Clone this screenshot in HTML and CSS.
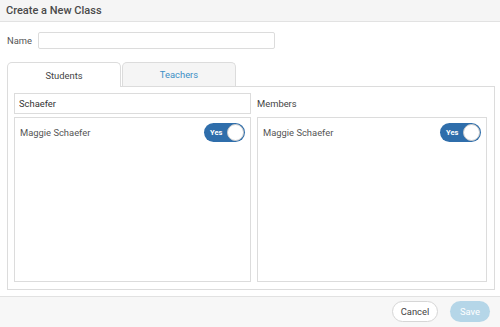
FILE: index.html
```html
<!DOCTYPE html>
<html lang="en">

<head>
    <meta charset="UTF-8">
    <title>Create a New Class</title>
    <link rel="stylesheet" href="styles.css">
</head>

<body>
    <header class="modal-header">
        <h1>Create a New Class</h1>
    </header>
    <div class="modal-body">
        <div class="name-row">
            <label for="class-name">Name</label>
            <input type="text" id="class-name">
        </div>
        <div class="tabs">
            <div class="tab active">Students</div>
            <div class="tab">Teachers</div>
        </div>
        <div class="tab-panel">
            <div class="col">
                <input type="text" class="search" value="Schaefer">
                <div class="list">
                    <div class="item">
                        <span>Maggie Schaefer</span>
                        <span class="toggle"><span class="toggle-text">Yes</span><span class="knob"></span></span>
                    </div>
                </div>
            </div>
            <div class="col">
                <div class="col-title">Members</div>
                <div class="list">
                    <div class="item">
                        <span>Maggie Schaefer</span>
                        <span class="toggle"><span class="toggle-text">Yes</span><span class="knob"></span></span>
                    </div>
                </div>
            </div>
        </div>
    </div>
    <footer class="modal-footer">
        <button class="btn cancel">Cancel</button>
        <button class="btn save">Save</button>
    </footer>
</body>

</html>
```

FILE: styles.css
```css
body {
    margin: 0;
    width: 500px;
    height: 327px;
    font-family: Roboto, "Liberation Sans", sans-serif;
    color: #555;
    background-color: white;
    overflow: hidden;
}

.modal-header {
    height: 21px;
    background-color: #f5f5f5;
    border-bottom: 1px solid #e2e2e2;
    display: flex;
    align-items: center;
    padding-left: 6px;
}

.modal-header h1 {
    margin: 0;
    font-size: 11px;
    font-weight: 500;
    color: #4a4a4a;
}

.modal-body {
    padding: 10px 5px 0 7px;
}

.name-row {
    display: flex;
    align-items: center;
    font-size: 9.4px;
}

.name-row label {
    width: 31px;
}

.name-row input {
    width: 237px;
    height: 17px;
    box-sizing: border-box;
    border: 1px solid #dcdcdc;
    border-radius: 2px;
    margin: 0;
}

.tabs {
    display: flex;
    margin-top: 13px;
    height: 24px;
    gap: 1px;
}

.tab {
    width: 114px;
    box-sizing: border-box;
    border: 1px solid #dcdcdc;
    border-bottom: none;
    border-radius: 5px 5px 0 0;
    display: flex;
    align-items: center;
    justify-content: center;
    font-size: 9.4px;
    color: #3d8fc6;
    background-color: #f5f5f5;
    position: relative;
}

.tab.active {
    color: #444;
    background-color: white;
    height: 25px;
    z-index: 1;
}

.tab-panel {
    border: 1px solid #dcdcdc;
    height: 204px;
    box-sizing: border-box;
    padding: 6px 7px 7px 6px;
    display: grid;
    grid-template-columns: 237px 1fr;
    gap: 6px;
}

.col {
    display: flex;
    flex-direction: column;
    gap: 3px;
}

.search {
    height: 21px;
    box-sizing: border-box;
    border: 1px solid #dcdcdc;
    margin: 0;
    padding: 0 4px;
    font-family: inherit;
    font-size: 9.4px;
    color: #333;
}

.col-title {
    height: 21px;
    display: flex;
    align-items: center;
    font-size: 9.4px;
    color: #444;
}

.list {
    flex: 1;
    border: 1px solid #dcdcdc;
    padding: 5px 5px;
}

.item {
    display: flex;
    justify-content: space-between;
    align-items: center;
    font-size: 9.4px;
}

.toggle {
    width: 41px;
    height: 19px;
    border-radius: 10px;
    background-color: #2f6eab;
    display: flex;
    align-items: center;
    justify-content: space-between;
    box-sizing: border-box;
    padding: 0 1px 0 6px;
}

.toggle-text {
    color: white;
    font-size: 7.5px;
    font-weight: bold;
}

.knob {
    width: 17px;
    height: 17px;
    border-radius: 50%;
    background-color: white;
    box-sizing: border-box;
    border: 1px solid #ccc;
}

.modal-footer {
    margin-top: 6px;
    border-top: 1px solid #e2e2e2;
    background-color: #f7f7f7;
    height: 32px;
    box-sizing: border-box;
    display: flex;
    justify-content: flex-end;
    align-items: center;
    gap: 12px;
    padding: 0 10px 2px 0;
}

.btn {
    height: 21px;
    border-radius: 11px;
    font-family: inherit;
    font-size: 9.4px;
    padding: 0;
}

.cancel {
    width: 46px;
    background-color: white;
    border: 1px solid #d6d6d6;
    color: #444;
}

.save {
    width: 40px;
    background-color: #b5d6e8;
    border: none;
    color: white;
}
```
